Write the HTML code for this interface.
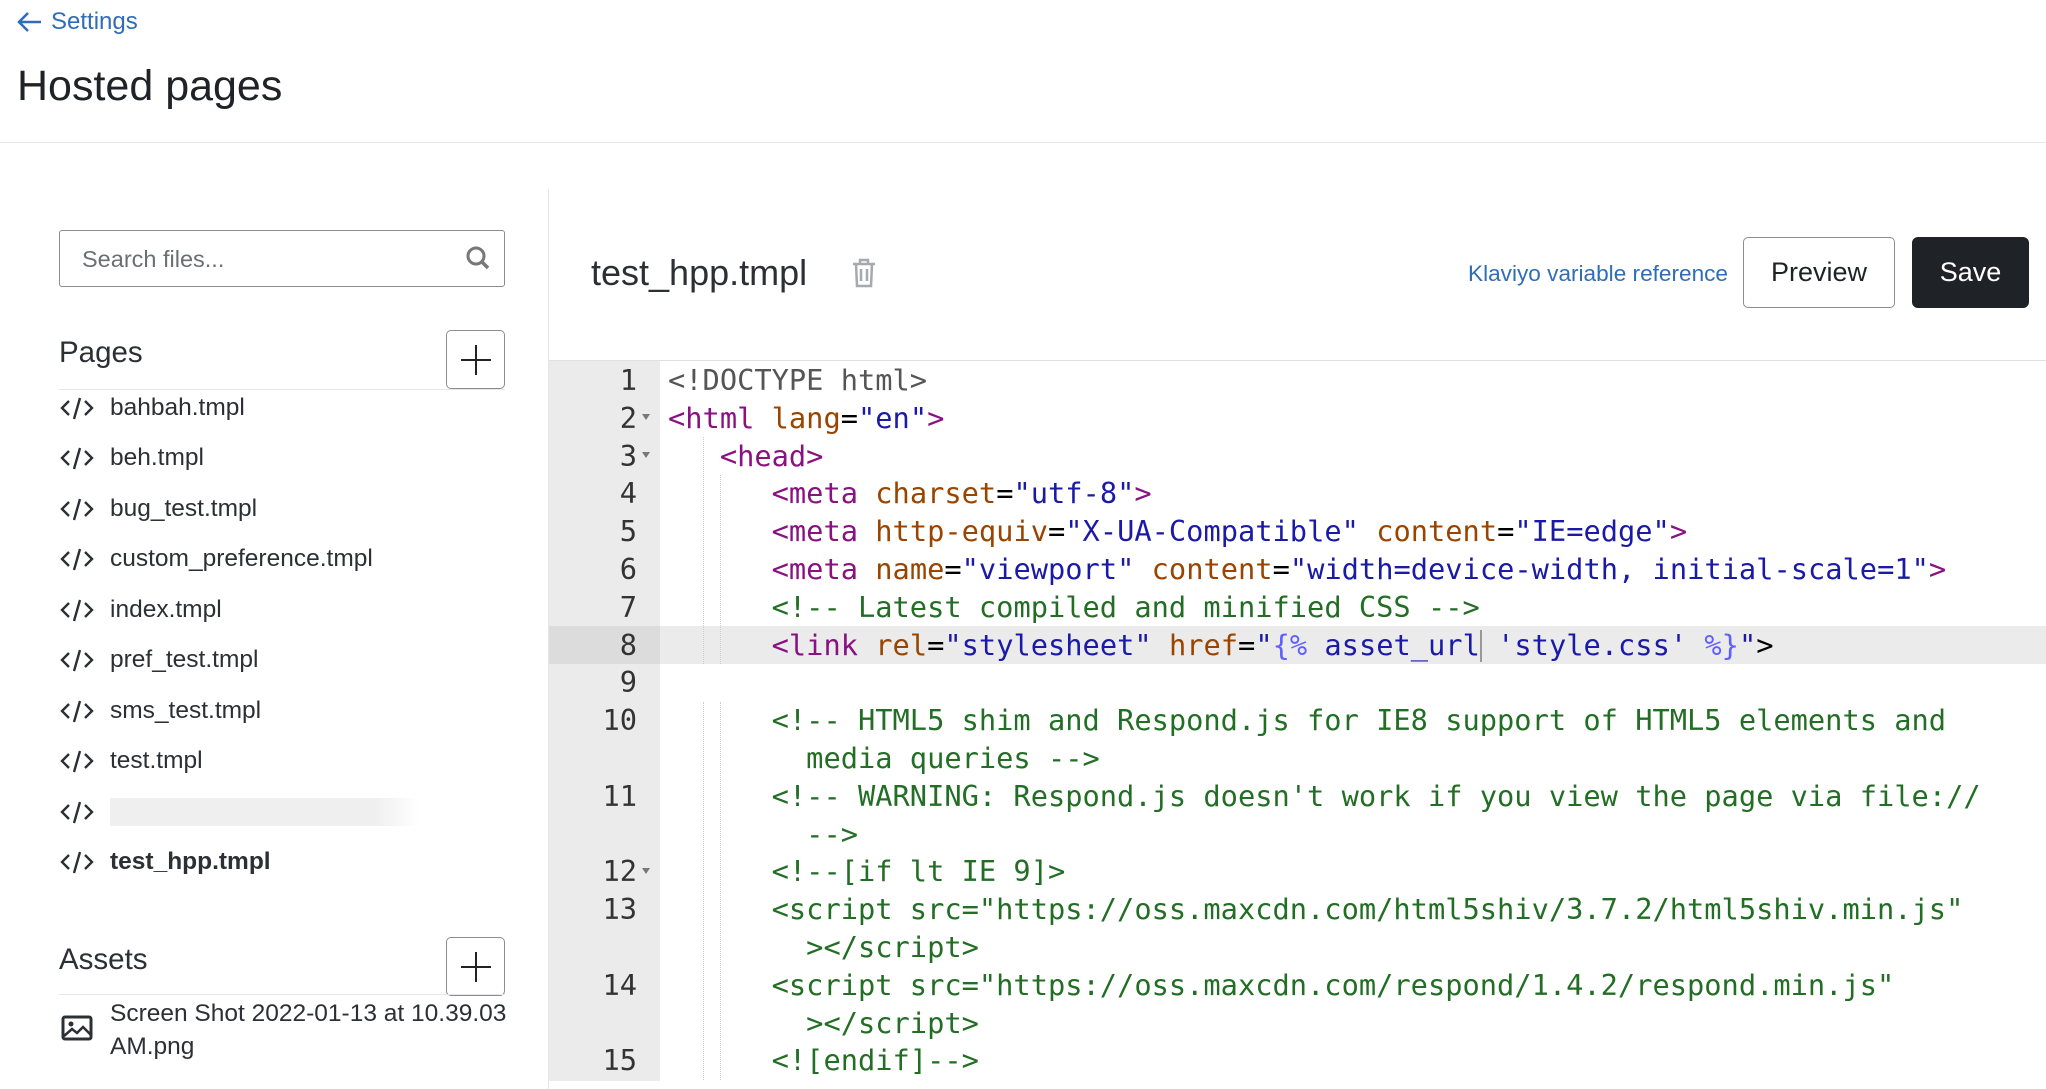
<!DOCTYPE html>
<html><head><meta charset="utf-8"><style>
*{margin:0;padding:0;box-sizing:border-box}
body{width:2046px;height:1080px;overflow:hidden;background:#fff;font-family:"Liberation Sans",sans-serif;color:#2c3035;position:relative}
.abs{position:absolute}
.back{left:17px;top:8px;font-size:24px;color:#2f6db5;display:flex;align-items:center;gap:8px}
h1{position:absolute;left:17px;top:62px;font-size:43px;font-weight:400;color:#1f2226}
.hr{left:0;top:142px;width:2046px;height:1px;background:#e6e6e6}
.vr{left:548px;top:189px;width:1px;height:900px;background:#e6e6e6}
.search{left:59px;top:230px;width:446px;height:57px;border:1px solid #8a8d91;border-radius:3px;font-size:23.5px;color:#6b6f74;padding:15px 22px}
.sec{font-size:29.5px;color:#2c3035}
.plus{width:59px;height:59px;border:1px solid #8a8d91;border-radius:5px;background:#fff}
.plus:before,.plus:after{content:"";position:absolute;background:#222;left:14px;top:28px;width:30px;height:2px}
.plus:after{left:28px;top:14px;width:2px;height:30px}
.line{height:1px;background:#e6e6e6;left:59px;width:446px}
.item{left:60px;height:50px;display:flex;align-items:center;font-size:24.5px;color:#2c3035}
.item svg{margin-right:16px}
.code{font-family:"DejaVu Sans Mono",monospace;font-size:28.7px;line-height:37.8px;white-space:pre}
.gut{left:549px;top:361px;width:111px;height:720px;background:#ebebeb}
.ln{left:549px;width:88px;text-align:right;color:#333}
.t{color:#881280}.a{color:#994500}.s{color:#1a1aa6}.c{color:#236e25}.d{color:#555}.p{color:#5f5fff}.x{color:#000}
.guide{width:0;border-left:1px dotted #ccc}
.fold{left:642px;width:0;height:0;border-left:4px solid transparent;border-right:4px solid transparent;border-top:6px solid #777}
</style></head><body>
<div class="abs back"><svg width="26" height="22" viewBox="0 0 26 22"><path d="M24 11H3M11 2L2 11l9 9" fill="none" stroke="#2f6db5" stroke-width="2.5"/></svg>Settings</div>
<h1>Hosted pages</h1>
<div class="abs hr"></div>
<div class="abs vr"></div>
<div class="abs search">Search files...</div>
<svg class="abs" style="left:465px;top:245px" width="26" height="26" viewBox="0 0 26 26"><circle cx="11" cy="11" r="8" fill="none" stroke="#777" stroke-width="3"/><path d="M17 17l6 6" stroke="#777" stroke-width="3.5"/></svg>
<div class="abs sec" style="left:59px;top:336px">Pages</div>
<div class="abs plus" style="left:446px;top:330px"></div>
<div class="abs line" style="top:389px"></div>

<svg width="0" height="0" style="position:absolute"><defs><g id="ci"><path d="M9 5L2 12l7 7M25 5l7 7-7 7M20 2l-6 21" fill="none" stroke="#2c3035" stroke-width="2.4"/></g></defs></svg>
<div class="abs item" style="top:383px"><svg width="34" height="25"><use href="#ci"/></svg>bahbah.tmpl</div>
<div class="abs item" style="top:433px"><svg width="34" height="25"><use href="#ci"/></svg>beh.tmpl</div>
<div class="abs item" style="top:484px"><svg width="34" height="25"><use href="#ci"/></svg>bug_test.tmpl</div>
<div class="abs item" style="top:534px"><svg width="34" height="25"><use href="#ci"/></svg>custom_preference.tmpl</div>
<div class="abs item" style="top:585px"><svg width="34" height="25"><use href="#ci"/></svg>index.tmpl</div>
<div class="abs item" style="top:635px"><svg width="34" height="25"><use href="#ci"/></svg>pref_test.tmpl</div>
<div class="abs item" style="top:686px"><svg width="34" height="25"><use href="#ci"/></svg>sms_test.tmpl</div>
<div class="abs item" style="top:736px"><svg width="34" height="25"><use href="#ci"/></svg>test.tmpl</div>
<div class="abs item" style="top:787px"><svg width="34" height="25"><use href="#ci"/></svg><span style="display:inline-block;width:310px;height:28px;background:linear-gradient(90deg,#efefef 85%,#fff)"></span></div>
<div class="abs item" style="top:837px;font-weight:700"><svg width="34" height="25"><use href="#ci"/></svg>test_hpp.tmpl</div>

<div class="abs sec" style="left:59px;top:943px">Assets</div>
<div class="abs plus" style="left:446px;top:937px"></div>
<div class="abs line" style="top:994px"></div>
<svg class="abs" style="left:61px;top:1015px" width="32" height="26" viewBox="0 0 32 26"><rect x="2" y="2" width="28" height="22" rx="2" fill="none" stroke="#2c3035" stroke-width="3"/><circle cx="10" cy="9" r="2.5" fill="#2c3035"/><path d="M3 21l8-7 5 4 6-6 8 8" fill="none" stroke="#2c3035" stroke-width="2.5"/></svg>
<div class="abs" style="left:110px;top:997px;font-size:24.5px;line-height:33px;color:#2c3035">Screen Shot 2022-01-13 at 10.39.03<br>AM.png</div>

<div class="abs" style="left:591px;top:252px;font-size:36px;color:#2c3035">test_hpp.tmpl</div>
<svg class="abs" style="left:849px;top:256px" width="30" height="34" viewBox="0 0 30 34"><path d="M4 8h22M11 8V4h8v4M7 8l1 22h14l1-22M12 13v12M18 13v12" fill="none" stroke="#a6a9ad" stroke-width="2.5"/></svg>
<div class="abs" style="right:318px;top:261px;font-size:22.6px;color:#2f6db5">Klaviyo variable reference</div>
<div class="abs" style="left:1743px;top:237px;width:152px;height:71px;border:1px solid #8a8d91;border-radius:5px;font-size:27px;color:#1f2226;text-align:center;line-height:69px">Preview</div>
<div class="abs" style="left:1912px;top:237px;width:117px;height:71px;background:#1f2226;border-radius:6px;font-size:27px;color:#fff;text-align:center;line-height:71px">Save</div>

<div class="abs" style="left:549px;top:360px;width:1497px;height:1px;background:#e0e0e0"></div>
<div class="abs gut"></div>
<div class="abs" style="left:660px;top:626px;width:1386px;height:38px;background:#ebebeb"></div>
<div class="abs" style="left:549px;top:626px;width:111px;height:38px;background:#dcdcdc"></div>
<div class="abs" style="left:1480px;top:630px;width:2px;height:32px;background:#999"></div>

<div class="abs code ln" style="top:362px">1
2
3
4
5
6
7
8
9
10

11

12
13

14

15</div>
<div class="abs fold" style="top:414px"></div>
<div class="abs fold" style="top:452px"></div>
<div class="abs fold" style="top:868px"></div>

<div class="abs guide" style="left:703px;top:437px;height:227px"></div>
<div class="abs guide" style="left:720px;top:475px;height:189px"></div>
<div class="abs guide" style="left:703px;top:702px;height:378px"></div>
<div class="abs guide" style="left:720px;top:702px;height:378px"></div>

<div class="abs code" style="left:668px;top:362px"><span class="d">&lt;!DOCTYPE html&gt;</span>
<span class="t">&lt;html</span> <span class="a">lang</span><span class="x">=</span><span class="s">"en"</span><span class="t">&gt;</span>
   <span class="t">&lt;head&gt;</span>
      <span class="t">&lt;meta</span> <span class="a">charset</span><span class="x">=</span><span class="s">"utf-8"</span><span class="t">&gt;</span>
      <span class="t">&lt;meta</span> <span class="a">http-equiv</span><span class="x">=</span><span class="s">"X-UA-Compatible"</span> <span class="a">content</span><span class="x">=</span><span class="s">"IE=edge"</span><span class="t">&gt;</span>
      <span class="t">&lt;meta</span> <span class="a">name</span><span class="x">=</span><span class="s">"viewport"</span> <span class="a">content</span><span class="x">=</span><span class="s">"width=device-width, initial-scale=1"</span><span class="t">&gt;</span>
      <span class="c">&lt;!-- Latest compiled and minified CSS --&gt;</span>
      <span class="t">&lt;link</span> <span class="a">rel</span><span class="x">=</span><span class="s">"stylesheet"</span> <span class="a">href</span><span class="x">=</span><span class="s">"</span><span class="p">{%</span><span class="s"> asset_url 'style.css' </span><span class="p">%}</span><span class="s">"</span><span class="x">&gt;</span>

<span class="c">      &lt;!-- HTML5 shim and Respond.js for IE8 support of HTML5 elements and
        media queries --&gt;
      &lt;!-- WARNING: Respond.js doesn't work if you view the page via file://
        --&gt;
      &lt;!--[if lt IE 9]&gt;
      &lt;script src="https://oss.maxcdn.com/html5shiv/3.7.2/html5shiv.min.js"
        &gt;&lt;/script&gt;
      &lt;script src="https://oss.maxcdn.com/respond/1.4.2/respond.min.js"
        &gt;&lt;/script&gt;
      &lt;![endif]--&gt;</span></div>
</body></html>
